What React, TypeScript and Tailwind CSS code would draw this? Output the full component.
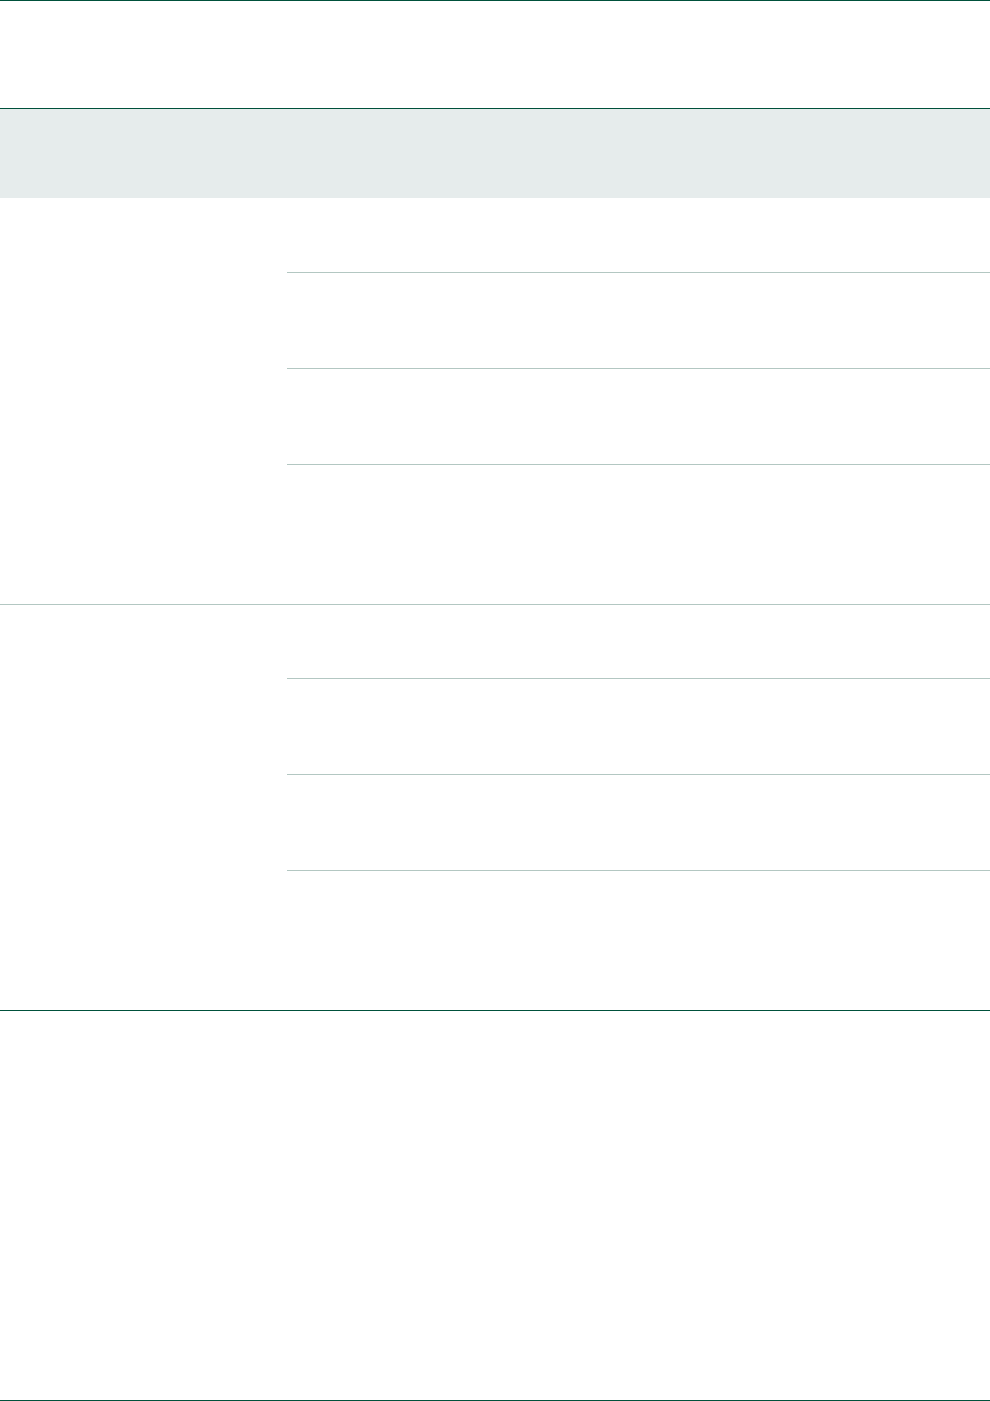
const groups = [0, 1];

function Group({ first }: { first: boolean }) {
  return (
    <div
      className={`flex ${first ? "" : "border-t border-[#b3c7c2]"}`}
    >
      {/* label cell */}
      <div className="w-[287px] shrink-0" />
      {/* detail rows */}
      <div className="flex-1 flex flex-col">
        <div className={first ? "h-[74px]" : "h-[73px]"} />
        <div className="h-[96px] border-t border-[#b3c7c2]" />
        <div className="h-[96px] border-t border-[#b3c7c2]" />
        <div className="h-[140px] border-t border-[#b3c7c2]" />
      </div>
    </div>
  );
}

export default function App() {
  return (
    <div
      className="w-[990px] bg-white"
      style={{ fontFamily: '"Liberation Sans", Arial, sans-serif' }}
    >
      {/* Title area */}
      <div className="h-[108px] border-t border-[#00513b]" />

      {/* Header band */}
      <div className="h-[90px] border-t border-[#00513b] bg-[#e6ecec]" />

      {/* Body groups */}
      {groups.map((g) => (
        <Group key={g} first={g === 0} />
      ))}

      {/* Footer */}
      <div className="h-[391px] border-t border-b border-[#00513b]" />
    </div>
  );
}
